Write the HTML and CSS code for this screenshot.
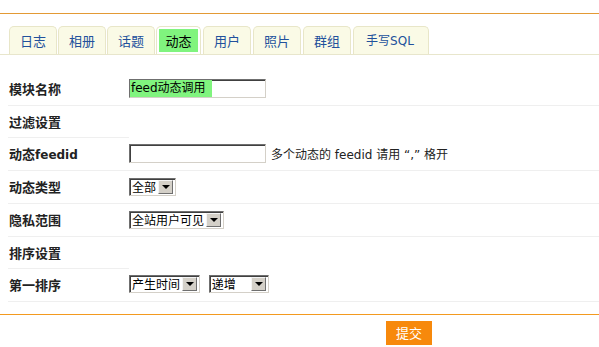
FILE: index.html
```html
<!DOCTYPE html>
<html lang="zh-CN">
<head>
  <meta charset="UTF-8" />
  <title>动态调用</title>
  <link rel="stylesheet" href="styles.css">
</head>
<body>
  <div class="topbar"></div>

  <ul class="tabs">
    <li>日志</li>
    <li>相册</li>
    <li>话题</li>
    <li class="active"><span>动态</span></li>
    <li>用户</li>
    <li>照片</li>
    <li>群组</li>
    <li>手写SQL</li>
  </ul>

  <table class="form">
    <tr>
      <th>模块名称</th>
      <td><div class="field"><span class="sel">feed动态调用</span></div></td>
    </tr>
    <tr class="section">
      <th>过滤设置</th>
      <td></td>
    </tr>
    <tr>
      <th>动态<span class="latin">feedid</span></th>
      <td><div class="field"></div><span class="hint">多个动态的 feedid 请用 “,” 格开</span></td>
    </tr>
    <tr>
      <th>动态类型</th>
      <td>
        <div class="select">全部<span class="arrow"></span></div>
      </td>
    </tr>
    <tr>
      <th>隐私范围</th>
      <td>
        <div class="select">全站用户可见<span class="arrow"></span></div>
      </td>
    </tr>
    <tr class="section">
      <th>排序设置</th>
      <td></td>
    </tr>
    <tr>
      <th>第一排序</th>
      <td>
        <div class="select">产生时间<span class="arrow"></span></div>
        <div class="select order">递增<span class="arrow"></span></div>
      </td>
    </tr>
  </table>

  <div class="footer">
    <button class="submit">提交</button>
  </div>
</body>
</html>
```

FILE: styles.css
```css
body {
  margin: 0;
  padding: 0;
  background-color: #fff;
  color: #111;
  font-family: "DejaVu Sans", "Noto Sans CJK SC", sans-serif;
  font-size: 12px;
}

.topbar {
  height: 13px;
  border-bottom: 1px solid #e39a35;
}

.tabs {
  display: flex;
  gap: 1px;
  margin: 12px 0 0 0;
  padding: 0 0 0 9px;
  list-style: none;
  border-bottom: 1px solid #e8e6cc;
}

.tabs li {
  height: 27px;
  padding: 0 10px;
  line-height: 28px;
  font-family: "Noto Sans CJK SC", sans-serif;
  font-size: 13px;
  color: #22519c;
  background-color: #fafae6;
  border: 1px solid #e8e6c8;
  border-bottom: none;
  border-radius: 5px 5px 0 0;
}

.tabs li:nth-child(n+5) {
  margin-left: 1px;
}

.tabs li:last-child {
  padding: 0 14px 0 12px;
  font-family: "DejaVu Sans", "Noto Sans CJK SC", sans-serif;
  font-size: 12px;
}

.tabs li.active {
  padding: 2px 2px 0 2px;
  height: 25px;
  background-color: #fff;
}

.tabs li.active span {
  display: block;
  height: 23px;
  width: 39px;
  text-align: center;
  line-height: 23px;
  color: #000;
  background-color: #80f47e;
}

.form {
  margin: 17px 0 0 8px;
  width: 591px;
  border-collapse: collapse;
}

.form tr {
  height: 33px;
}

.form tr.section {
  height: 32px;
}

.form th,
.form td {
  padding: 0;
  border-bottom: 1px solid #efefef;
  vertical-align: middle;
}

.form th {
  width: 120px;
  padding-left: 1px;
  text-align: left;
  font-family: "Noto Sans CJK SC", sans-serif;
  font-size: 13px;
  font-weight: bold;
  color: #222;
}

.form th .latin {
  font-family: "DejaVu Sans", sans-serif;
  font-size: 12px;
}

.form tr.section td {
  border-bottom: none;
}

.field {
  display: inline-block;
  vertical-align: middle;
  width: 135px;
  height: 17px;
  border: 1px solid;
  border-color: #6f6f6f #d4d0c8 #d4d0c8 #6f6f6f;
  box-shadow: inset 1px 1px 0 #404040;
  background-color: #fff;
  overflow: hidden;
}

.field .sel {
  display: inline-block;
  height: 19px;
  margin-top: -1px;
  padding: 0 1px;
  width: 80px;
  line-height: 19px;
  font-family: "DejaVu Sans", "Noto Sans CJK SC", sans-serif;
  font-size: 12px;
  color: #000;
  background-color: #80f47e;
}

.hint {
  margin-left: 5px;
  vertical-align: middle;
  font-size: 12px;
  color: #222;
}

.select {
  display: inline-flex;
  align-items: center;
  vertical-align: middle;
  height: 16px;
  padding-left: 2px;
  border: 1px solid;
  border-color: #6f6f6f #d4d0c8 #d4d0c8 #6f6f6f;
  box-shadow: inset 1px 1px 0 #404040;
  font-family: "Noto Sans CJK SC", sans-serif;
  font-size: 12px;
  line-height: 16px;
  color: #000;
  background-color: #fff;
}

.select .arrow {
  position: relative;
  width: 13px;
  height: 12px;
  margin: 0 2px 0 2px;
  background-color: #d4d0c8;
  border: 1px solid;
  border-color: #f4f4f4 #6f6f6f #6f6f6f #f4f4f4;
}

.select .arrow::after {
  content: "";
  position: absolute;
  left: 3px;
  top: 4px;
  border-left: 4px solid transparent;
  border-right: 4px solid transparent;
  border-top: 4px solid #000;
}

.select.order {
  margin-left: 5px;
  width: 56px;
  justify-content: space-between;
}

.footer {
  margin-top: 12px;
  height: 34px;
  border-top: 1px solid #f39a1f;
  padding-left: 386px;
}

.submit {
  margin-top: 6px;
  width: 46px;
  height: 24px;
  padding: 0;
  border: none;
  background-color: #f7890c;
  color: #fff;
  font-family: "Noto Sans CJK SC", sans-serif;
  font-size: 13px;
}
```
